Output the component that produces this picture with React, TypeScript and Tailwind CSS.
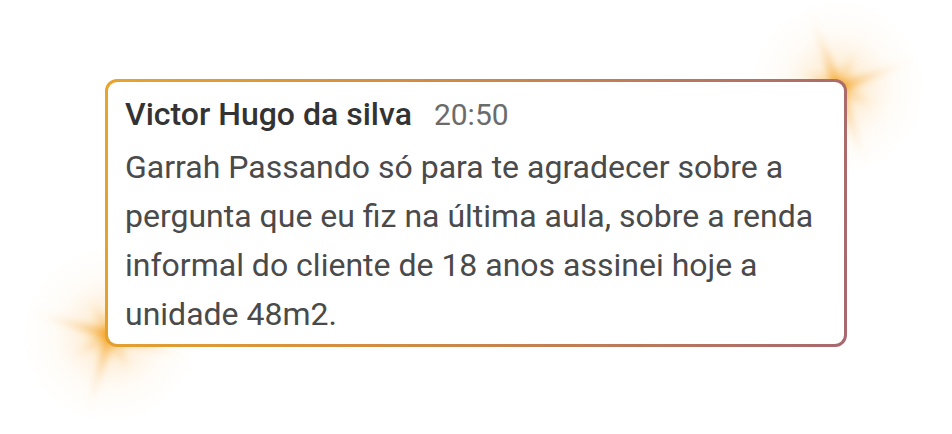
import React from "react";

function Sparkle({ id, rotate }: { id: string; rotate: number }) {
  return (
    <svg width="240" height="240" viewBox="-120 -120 240 240">
      <defs>
        <radialGradient id={`${id}-halo`} cx="0" cy="0" r="90" gradientUnits="userSpaceOnUse">
          <stop offset="0" stopColor="#f7a21b" stopOpacity="0.45" />
          <stop offset="0.3" stopColor="#f9b550" stopOpacity="0.2" />
          <stop offset="0.65" stopColor="#fcd4a0" stopOpacity="0.08" />
          <stop offset="1" stopColor="#fde2b8" stopOpacity="0" />
        </radialGradient>
        <radialGradient id={`${id}-ray`} cx="0" cy="0" r="90" gradientUnits="userSpaceOnUse">
          <stop offset="0" stopColor="#f39c12" stopOpacity="0.7" />
          <stop offset="0.45" stopColor="#f6b04a" stopOpacity="0.28" />
          <stop offset="1" stopColor="#fbd59a" stopOpacity="0" />
        </radialGradient>
        <filter id={`${id}-blur`} x="-50%" y="-50%" width="200%" height="200%">
          <feGaussianBlur stdDeviation="3.6" />
        </filter>
      </defs>
      <circle cx="0" cy="0" r="90" fill={`url(#${id}-halo)`} />
      <g transform={`rotate(${rotate})`} filter={`url(#${id}-blur)`} fill={`url(#${id}-ray)`}>
        <polygon points="0,-90 5,0 0,90 -5,0" />
        <polygon points="-90,0 0,5 90,0 0,-5" />
        <polygon points="0,-40 9,0 0,40 -9,0" transform="rotate(45)" opacity="0.4" />
        <polygon points="0,-40 9,0 0,40 -9,0" transform="rotate(-45)" opacity="0.4" />
      </g>
    </svg>
  );
}

export default function App() {
  return (
    <div className="relative w-[952px] h-[434px] bg-white overflow-hidden" style={{ fontFamily: "Roboto, 'Noto Sans', sans-serif" }}>
      {/* glows behind the card corners */}
      <div className="absolute left-[718px] top-[-32px]">
        <Sparkle id="tr" rotate={-20} />
      </div>
      <div className="absolute left-[-10px] top-[215px]">
        <Sparkle id="bl" rotate={16} />
      </div>

      <div className="relative pt-[79px] pl-[105px]">
        <div className="w-[742px] h-[268px] rounded-[12px] p-[3px] bg-[linear-gradient(100deg,#e8a42c_0%,#cf8a45_45%,#a7686f_100%)]">
          <div className="h-full rounded-[9px] bg-white pl-[17px] pr-4 pt-[13px]">
            <div className="flex items-baseline gap-[22px] leading-[38px]">
              <span className="text-[32px] font-medium text-[#333333]">Victor Hugo da silva</span>
              <span className="text-[30px] text-[#6b6b6b]">20:50</span>
            </div>
            <p className="mt-[9px] text-[32px] leading-[49px] text-[#4a4a4a]">
              Garrah Passando só para te agradecer sobre a pergunta que eu fiz na última aula, sobre a renda informal do cliente de 18 anos assinei hoje a unidade 48m2.
            </p>
          </div>
        </div>
      </div>
    </div>
  );
}
